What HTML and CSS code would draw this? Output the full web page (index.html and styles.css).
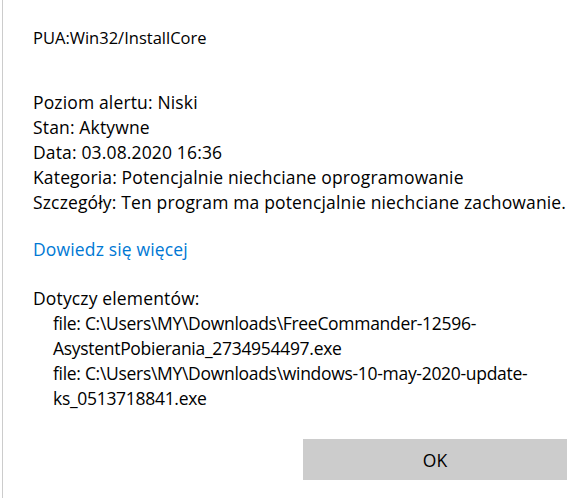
FILE: index.html
```html
<!DOCTYPE html>
<html>

<head>
    <title>PUA:Win32/InstallCore</title>
    <meta charset="utf-8">
    <link rel="stylesheet" href="styles.css">
</head>

<body>
    <div class="panel">
        <p class="threat">PUA:Win32/InstallCore</p>
        <div class="details">
            <p>Poziom alertu: Niski</p>
            <p>Stan: Aktywne</p>
            <p>Data: 03.08.2020 16:36</p>
            <p>Kategoria: Potencjalnie niechciane oprogramowanie</p>
            <p>Szczegóły: Ten program ma potencjalnie niechciane zachowanie.</p>
        </div>
        <a class="more" href="#">Dowiedz się więcej</a>
        <div class="items">
            <p>Dotyczy elementów:</p>
            <p class="file">file: C:\Users\MY\Downloads\FreeCommander-12596-<br>AsystentPobierania_2734954497.exe</p>
            <p class="file">file: C:\Users\MY\Downloads\windows-10-may-2020-update-<br>ks_0513718841.exe</p>
        </div>
        <div class="actions">
            <button class="ok">OK</button>
        </div>
    </div>
</body>

</html>
```

FILE: styles.css
```css
body {
    margin: 0;
    background: #fff;
    font-family: 'Open Sans', 'Noto Sans', sans-serif;
    font-size: 17.5px;
    letter-spacing: 0.15px;
    color: #000;
}

p {
    margin: 0;
}

.panel {
    height: 498px;
    box-sizing: border-box;
    margin-left: 2px;
    border-left: 1px solid #cccccc;
    padding: 25px 0 0 30px;
    display: flex;
    flex-direction: column;
    align-items: flex-start;
}

.threat {
    font-size: 16.5px;
    letter-spacing: 0;
    line-height: 25px;
}

.details {
    margin-top: 40px;
    line-height: 25px;
}

.more {
    margin-top: 22px;
    line-height: 25px;
    color: #0078d4;
    text-decoration: none;
}

.items {
    margin-top: 24px;
    line-height: 25px;
}

.items .file {
    padding-left: 20px;
    letter-spacing: -0.3px;
}

.actions {
    margin-top: 28px;
    align-self: stretch;
    display: flex;
    justify-content: flex-end;
    padding-right: 9px;
}

.ok {
    width: 264px;
    height: 41px;
    border: none;
    background: #cccccc;
    font-family: inherit;
    font-size: 17.5px;
    color: #000;
}
```
